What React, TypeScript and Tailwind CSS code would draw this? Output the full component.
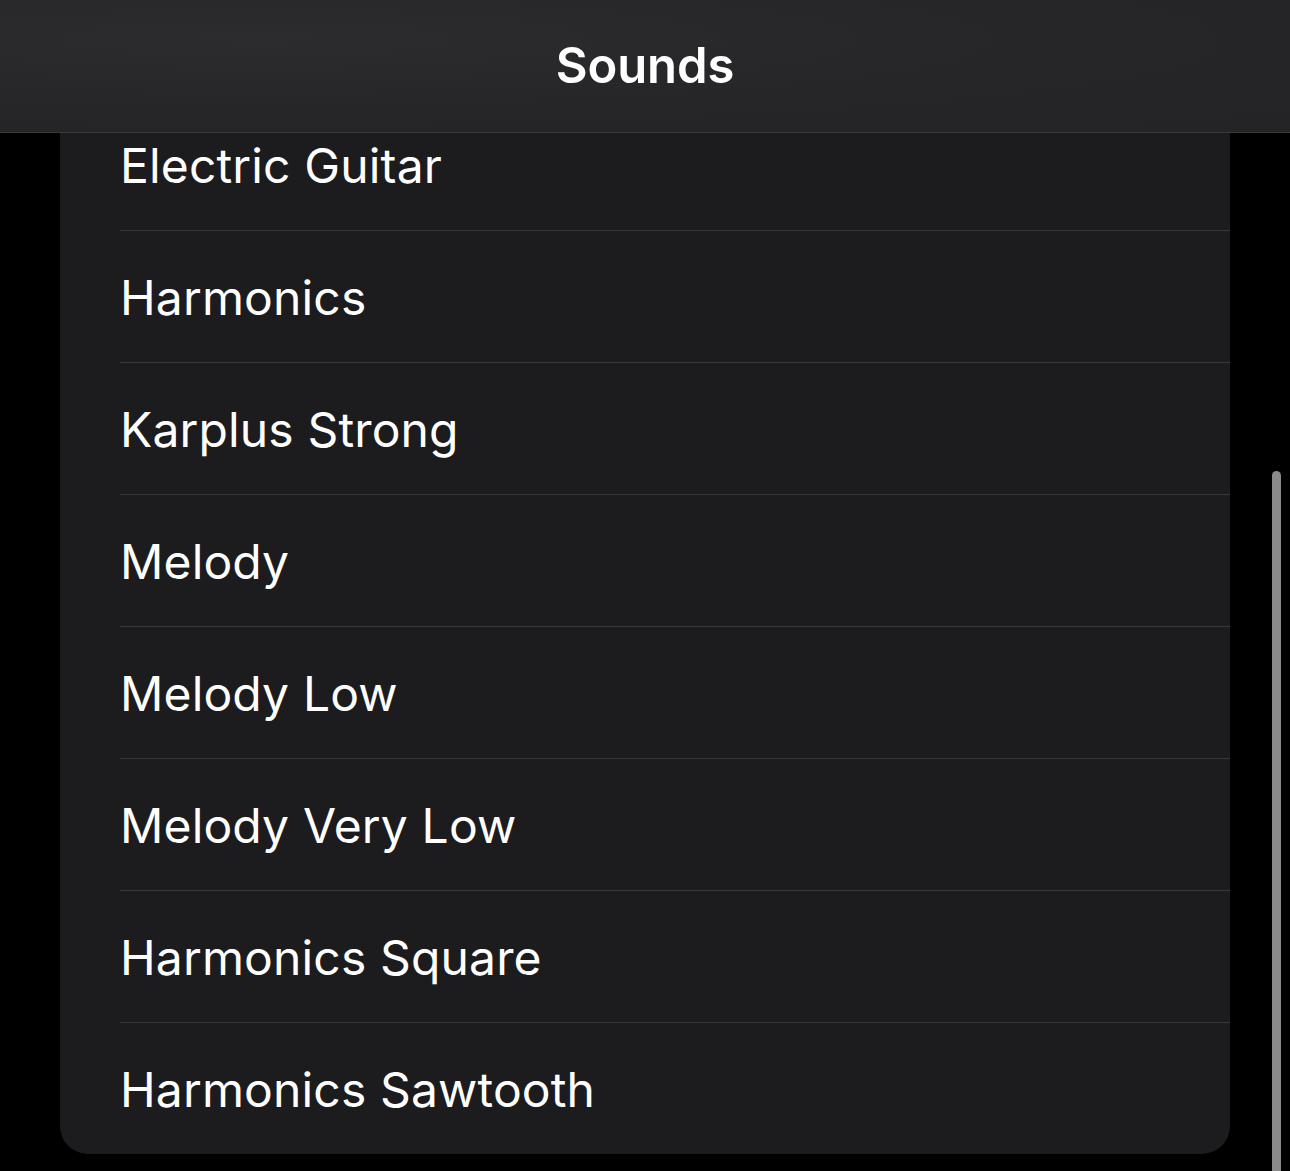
const sounds = [
  "Electric Guitar",
  "Harmonics",
  "Karplus Strong",
  "Melody",
  "Melody Low",
  "Melody Very Low",
  "Harmonics Square",
  "Harmonics Sawtooth",
];

export default function App() {
  return (
    <div
      className="relative h-[1171px] w-[1290px] overflow-hidden bg-black text-white"
      style={{ fontFamily: "Inter, 'Noto Sans', sans-serif" }}
    >
      {/* nav bar sits over the scrolled list */}
      <header className="absolute inset-x-0 top-0 z-10 flex h-[133px] items-center justify-center border-b border-[#3a3a3c] bg-[radial-gradient(ellipse_at_20%_30%,#2c2c2e_0%,#262628_55%,#242426_100%)]">
        <h1 className="text-[49px] font-semibold tracking-[-0.1px]">Sounds</h1>
      </header>

      <main className="px-[60px] pt-[99px]">
        <ul className="overflow-hidden rounded-[28px] bg-[#1c1c1e]">
          {sounds.map((name, idx) => (
            <li key={name} className="pl-[60px]">
              <div
                className={
                  idx === sounds.length - 1
                    ? "flex h-[131px] items-center pt-[2px] text-[48px] leading-none tracking-[0.15px]"
                    : "flex h-[132px] items-center border-b border-[#38383a] pt-[2px] text-[48px] leading-none tracking-[0.15px]"
                }
              >
                {name}
              </div>
            </li>
          ))}
        </ul>
      </main>

      {/* scroll indicator */}
      <div className="absolute right-[9px] top-[471px] h-[720px] w-[9px] rounded-full bg-[#8a8a8a]" />
    </div>
  );
}
